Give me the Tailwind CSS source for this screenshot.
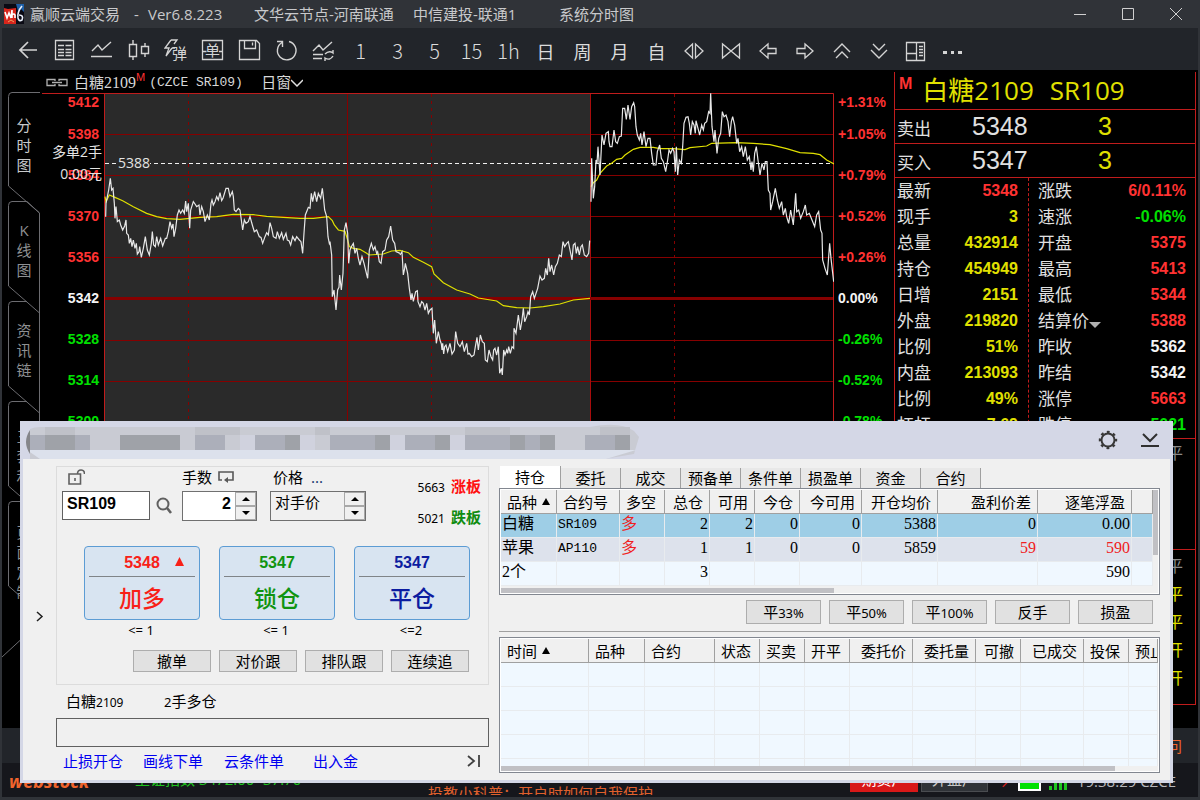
<!DOCTYPE html>
<html lang="zh-CN">
  <head>
    <meta charset="UTF-8" />
    <meta name="viewport" content="width=device-width, initial-scale=1.0" />
    <title>赢顺云端交易</title>
    <script src="https://cdn.jsdelivr.net/npm/@tailwindcss/browser@4"></script>
  </head>
  <body class="bg-black font-['Open_Sans','Noto_Sans_CJK_SC',sans-serif]">
    <div class="relative flex min-h-screen flex-col overflow-hidden bg-[#303338]">
      <!-- Title bar -->
      <header class="flex h-7 items-center pl-1 text-[15px] text-[#c8c9cb]">
        <svg class="mr-1.5 h-5 w-5 shrink-0" viewBox="0 0 20 20">
          <rect width="20" height="20" fill="#0a0a14" />
          <path d="M0 4l4 1 8-1v16H0z" fill="#d8261c" />
          <path d="M12 0h8v8l-3-3-3 2z" fill="#1d5fa8" />
          <path d="M1 8l2 6 2-5 2 5 1-8v8M8 11q2-2 3 0v3" fill="none" stroke="#fff" stroke-width="1.6" />
          <path d="M18 2q-5 6-4 12 1 4 4 2 2-5-3-5" fill="none" stroke="#e8eef8" stroke-width="1.6" />
          <path d="M4 18l3-2 3 2" stroke="#f0a060" fill="none" />
        </svg>
        <span class="w-[104px]">赢顺云端交易</span>
        <span class="w-[14px]">-</span>
        <span class="w-[106px]">Ver6.8.223</span>
        <span class="w-[159px]">文华云节点-河南联通</span>
        <span class="w-[146px]">中信建投-联通1</span>
        <span class="grow">系统分时图</span>
        <button class="flex w-12 justify-center" aria-label="最小化">
          <svg class="h-3 w-3" viewBox="0 0 12 12" stroke="#d0d0d0"><path d="M0 6.5h12" /></svg>
        </button>
        <button class="flex w-12 justify-center" aria-label="最大化">
          <svg class="h-3 w-3" viewBox="0 0 12 12" fill="none" stroke="#d0d0d0"><path d="M.5 .5h11v11H.5z" /></svg>
        </button>
        <button class="flex w-12 justify-center" aria-label="关闭">
          <svg class="h-3 w-3" viewBox="0 0 12 12" stroke="#d0d0d0"><path d="M0 0l12 12M12 0L0 12" /></svg>
        </button>
      </header>

      <!-- Toolbar -->
      <nav class="mr-[2px] ml-[2px] flex h-[42px] items-center bg-[#22252a] pt-1 pl-[7px] font-['Noto_Sans_CJK_SC',sans-serif] text-xl leading-6 font-light text-[#dcdcdc]">
        <button class="flex w-[37px] shrink-0 justify-center" aria-label="返回">
          <svg class="h-6 w-6" viewBox="0 0 24 24" fill="none" stroke="#d4d4d4" stroke-width="1.7"><path d="M21 11H4M12 3l-8 8 8 8" /></svg>
        </button>
        <button class="flex w-[37px] shrink-0 justify-center" aria-label="报价列表">
          <svg class="h-6 w-6" viewBox="0 0 24 24" fill="none" stroke="#d4d4d4" stroke-width="1.3"><path d="M2.500 1.500h18v19h-18zM5 6.500h6M12.500 6.500h6M5 10.500h6M12.500 10.500h6M5 13.500h6M12.500 13.500h6M5 16.500h6M12.500 16.500h6" /></svg>
        </button>
        <button class="flex w-[37px] shrink-0 justify-center" aria-label="分时图">
          <svg class="h-6 w-6" viewBox="0 0 24 24" fill="none" stroke="#d4d4d4" stroke-width="1.4"><path d="M2 12l6-6 4 5 9-8M1 17.500h21" /></svg>
        </button>
        <button class="flex w-[37px] shrink-0 justify-center" aria-label="K线图">
          <svg class="h-6 w-6" viewBox="0 0 24 24" fill="none" stroke="#d4d4d4" stroke-width="1.4"><path d="M2.500 5.500h7v12h-7zM6 1v4M6 18v3M14.500 7.500h7v7h-7zM18 4v3M18 15v3" /></svg>
        </button>
        <button class="flex w-[37px] shrink-0 justify-center" aria-label="弹出下单">
          <svg class="h-6 w-6" viewBox="0 0 24 24" fill="none" stroke="#d4d4d4" stroke-width="1.3">
            <path d="M7 1L1 9h4l-3 8 6-8M7 1h6l-3 4M8 9h3" />
            <text x="8" y="20" font-size="15" font-weight="400" fill="#d4d4d4" stroke="none">弹</text>
          </svg>
        </button>
        <button class="flex w-[37px] shrink-0 justify-center" aria-label="下单">
          <svg class="h-6 w-6" viewBox="0 0 24 24" fill="none" stroke="#d4d4d4" stroke-width="1.3">
            <path d="M1.500 1.500h20v19h-20zM1.500 12.500h4M18 12.500h4" />
            <text x="4" y="17" font-size="15" font-weight="400" fill="#d4d4d4" stroke="none">单</text>
          </svg>
        </button>
        <button class="flex w-[37px] shrink-0 justify-center" aria-label="保存">
          <svg class="h-6 w-6" viewBox="0 0 24 24" fill="none" stroke="#d4d4d4" stroke-width="1.3"><path d="M1.500 1.500h17l3 3v16h-20zM6.500 1.500v8h11v-8M14.500 3.500v3" /></svg>
        </button>
        <button class="flex w-[37px] shrink-0 justify-center" aria-label="刷新">
          <svg class="h-6 w-6" viewBox="0 0 24 24" fill="none" stroke="#d4d4d4" stroke-width="1.4"><path d="M14 2.500A9.300 9.300 0 1 1 7 3.500M2 2.500h5.500V8" /></svg>
        </button>
        <button class="flex w-[37px] shrink-0 justify-center" aria-label="分时切换">
          <svg class="h-6 w-6" viewBox="0 0 24 24" fill="none" stroke="#d4d4d4" stroke-width="1.4"><path d="M1 12l6-6 4 5 9-8M1 15.500h10M1 19.500h9M13 15q4-4 8-1v-3M21 17q-3 5-8 2v3" /></svg>
        </button>
        <button class="w-[37px] shrink-0">1</button>
        <button class="w-[37px] shrink-0">3</button>
        <button class="w-[37px] shrink-0">5</button>
        <button class="w-[37px] shrink-0">15</button>
        <button class="w-[37px] shrink-0">1h</button>
        <button class="w-[37px] shrink-0 text-lg font-normal">日</button>
        <button class="w-[37px] shrink-0 text-lg font-normal">周</button>
        <button class="w-[37px] shrink-0 text-lg font-normal">月</button>
        <button class="w-[37px] shrink-0 text-lg font-normal">自</button>
        <button class="flex w-[37px] shrink-0 justify-center" aria-label="放大">
          <svg class="h-6 w-6" viewBox="0 0 24 24" fill="none" stroke="#d4d4d4" stroke-width="1.3"><path d="M10.500 5v14L3 12zM13.500 5v14L21 12z" /></svg>
        </button>
        <button class="flex w-[37px] shrink-0 justify-center" aria-label="缩小">
          <svg class="h-6 w-6" viewBox="0 0 24 24" fill="none" stroke="#d4d4d4" stroke-width="1.3"><path d="M3.500 5v14l8.500-7zM20.500 5v14L12 12z" /></svg>
        </button>
        <button class="flex w-[37px] shrink-0 justify-center" aria-label="左移">
          <svg class="h-6 w-6" viewBox="0 0 24 24" fill="none" stroke="#d4d4d4" stroke-width="1.3"><path d="M4 12l8-7v4.500h8v5h-8V19z" /></svg>
        </button>
        <button class="flex w-[37px] shrink-0 justify-center" aria-label="右移">
          <svg class="h-6 w-6" viewBox="0 0 24 24" fill="none" stroke="#d4d4d4" stroke-width="1.3"><path d="M20 12l-8-7v4.500H4v5h8V19z" /></svg>
        </button>
        <button class="flex w-[37px] shrink-0 justify-center" aria-label="上翻">
          <svg class="h-6 w-6" viewBox="0 0 24 24" fill="none" stroke="#d4d4d4" stroke-width="1.4"><path d="M4 13l8-8 8 8M6 19l6-6 6 6" /></svg>
        </button>
        <button class="flex w-[37px] shrink-0 justify-center" aria-label="下翻">
          <svg class="h-6 w-6" viewBox="0 0 24 24" fill="none" stroke="#d4d4d4" stroke-width="1.4"><path d="M6 5l6 6 6-6M4 11l8 8 8-8" /></svg>
        </button>
        <button class="flex w-[37px] shrink-0 justify-center" aria-label="布局">
          <svg class="h-6 w-6" viewBox="0 0 24 24" fill="none" stroke="#d4d4d4" stroke-width="1.3"><path d="M2.500 3.500h18v18h-18zM12.500 3.500v18M2.500 14.500h10M15 7.500h4M15 10.500h4M15 13.500h4M15 16.500h4" /></svg>
        </button>
        <button class="flex w-[37px] shrink-0 justify-center" aria-label="更多">
          <svg class="h-6 w-6" viewBox="0 0 24 24" fill="#d4d4d4"><path d="M2 12h4v3H2zM10 12h3v3h-3zM17 12h4v3h-4z" /></svg>
        </button>
      </nav>

      <main class="mx-[2px] flex grow bg-black">
        <!-- Side tabs -->
        <nav class="relative w-[38px] shrink-0 overflow-hidden text-center text-[15px] leading-5 text-[#8e9092]">
          <svg class="absolute inset-0 h-[658px] w-[38px]" viewBox="2 70 38 658" fill="none" stroke="#6c6c70">
            <path d="M40 92.500H12q-3.500 0-3.500 4V186L39.500 213V413M27 201.500H12q-3.500 0-3.500 4V286L39.500 313M27 201.500L39.500 213M27 301.500H12q-3.500 0-3.500 4V386L39.500 413V600M27 401.500H12q-3.500 0-3.500 4V486L39.500 513M27 501.500H12q-3.500 0-3.500 4V586L39.500 613M2 657L40 622" />
          </svg>
          <a href="#" class="relative ml-2 block h-[105px] w-7 pt-[45px] text-[#c8cacc]">分<br />时<br />图</a>
          <a href="#" class="relative mt-[45px] ml-2 block h-[60px] w-7">K<br />线<br />图</a>
          <a href="#" class="relative mt-10 ml-2 block h-[60px] w-7">资<br />讯<br />链</a>
          <a href="#" class="relative mt-[46px] ml-2 block h-[60px] w-7">三<br />套<br />利</a>
          <a href="#" class="relative mt-9 ml-2 block h-20 w-7">页<br />面<br />定<br />制</a>
        </nav>

        <!-- Chart -->
        <section class="flex min-w-0 grow flex-col">
          <div class="flex h-[23px] items-center pt-0.5 pl-1.5 text-[15px] text-[#d8d8d8]">
            <svg class="mr-1.5 h-3 w-[22px]" viewBox="0 0 22 12" fill="none" stroke="#b0b0b0" stroke-width="1.300"><path d="M9 4V2.500H1v6h8V7M13 4V2.500h8v6h-8V7M6 5.500h10" /></svg>
            <span>白糖</span><span class="font-['Liberation_Serif',serif] text-base">2109</span>
            <sup class="mr-1 font-['Liberation_Sans',sans-serif] text-[11px] text-[#ff3232]">M</sup>
            <span class="w-28 font-['Liberation_Mono',monospace] text-[13px] whitespace-pre">(CZCE SR109)</span>
            <button class="flex items-center">日窗
              <svg class="h-3 w-3" viewBox="0 0 12 12" fill="none" stroke="#e0e0e0" stroke-width="1.500"><path d="M0 3l6 6 6-6" /></svg>
            </button>
          </div>
          <div class="relative flex font-['Liberation_Sans',sans-serif] text-sm font-bold text-[#ff3232]">
            <div class="ml-[2px] w-[62px] shrink-0 border-t border-[#c01c1c] pr-[5px] text-right leading-[41px]">
              <div class="h-5 leading-4">5412</div>
              <div>5398</div>
              <div>5384</div>
              <div>5370</div>
              <div>5356</div>
              <div class="text-[#f4f4f4]">5342</div>
              <div class="text-[#00e000]">5328</div>
              <div class="text-[#00e000]">5314</div>
              <div class="text-[#00e000]">5300</div>
            </div>
            <svg class="h-[630px] w-0 min-w-0 grow" viewBox="104 93 730 630" preserveAspectRatio="none" fill="none">
              <rect x="105" y="94" width="485" height="629" fill="#2a2a2a" />
              <g stroke="#860000">
                <path d="M105 134.500H834M105 175.500H834M105 216.500H834M105 257.500H834M105 340.500H834M105 381.500H834" />
                <path d="M347.500 93V723" />
                <path d="M590.500 93V723" stroke="#a80c0c" />
                <path d="M105 298.500H834" stroke-width="3" />
                <path d="M188.500 94V723M431.500 94V723M674.500 94V723" stroke-dasharray="3 4" />
              </g>
              <path d="M104 93.500H833.500V723M104.500 93V723" stroke="#c01c1c" />
              <path d="M105 163.500H834" stroke="#f0f0f0" stroke-dasharray="4 3" />
              <!-- average price -->
              <g stroke="#e0e000" stroke-width="3.600">
                <polyline transform="translate(0 200) scale(.33333)" points="315,-10 318,5 328,-15 345,-8 368,2 400,20 440,40 470,50 500,56 540,58 600,52 650,50 700,43 760,44 800,49 850,52 900,55 940,55 985,50 997,62 1003,75 1015,90 1035,94 1043,120 1048,140 1060,145 1080,148 1100,160 1107,165 1150,162 1175,153 1200,151 1225,158 1240,172 1270,187 1295,200 1302,222 1330,248 1370,270 1410,282 1435,294 1490,303 1510,317 1550,323 1590,324 1630,320 1680,312 1720,300 1770,295" />
                <polyline transform="translate(400 0) scale(.33333)" points="573,560 580,548 590,540 600,520 620,498 635,490 650,478 665,475 675,465 700,448 720,442 760,442 780,446 820,446 855,449 870,443 920,438 935,430 1010,428 1060,430 1110,434 1160,446 1200,458 1240,460 1260,464 1280,480 1302,492" />
              </g>
              <!-- last price -->
              <g stroke="#e8e8e8" stroke-width="3.600">
                <polyline transform="translate(0 200) scale(.33333)" points="317,50 318,10 326,-30 331,-65 335,-30 339,-35 343,10 345,55 348,20 352,65 358,60 362,75 368,90 374,78 378,60 380,100 385,105 388,130 392,115 396,140 400,120 405,145 409,130 412,162 417,155 419,140 424,172 430,145 436,110 442,150 448,165 454,130 457,95 461,135 466,140 470,110 475,135 482,115 488,138 496,115 500,115 505,95 510,65 515,85 519,72 522,110 527,85 532,45 537,30 542,40 548,30 553,40 557,3 560,35 565,10 569,85 572,30 580,5 585,12 590,20 597,15 600,45 605,20 610,35 615,65 622,45 628,60 633,10 636,0 640,15 645,5 650,-10 655,0 660,-22 665,2 669,-5 672,-15 678,-35 685,-35 690,-10 697,-25 700,-10 703,30 708,35 715,25 720,30 724,60 728,90 733,60 738,70 745,65 750,50 757,75 763,95 770,90 778,110 783,112 788,130 795,110 800,98 805,105 810,68 815,85 820,110 828,115 832,95 838,115 845,98 850,118 858,100 862,120 867,122 872,135 878,110 885,122 890,110 898,120 903,125 908,160 912,100 916,45 922,30 925,22 930,25 934,-20 938,5 944,-25 950,5 955,-20 962,-5 967,-35 971,0 974,30 980,50 984,110 988,130 990,125 995,165 997,290 1002,270 1005,300 1008,330 1013,270 1017,262 1019,225 1024,270 1029,220 1033,90 1038,68 1043,100 1046,190 1050,150 1054,140 1060,130 1065,160 1070,145 1075,175 1080,195 1086,170 1092,190 1098,215 1103,235 1108,150 1114,130 1120,150 1125,140 1130,160 1133,155 1138,185 1143,190 1148,155 1155,150 1160,120 1166,110 1172,78 1178,120 1184,130 1188,155 1200,160" />
                <polyline transform="translate(400 200) scale(.33333)" points="0,165 6,155 10,225 14,205 16,190 23,220 28,265 33,300 36,280 40,304 47,275 52,272 54,305 60,320 65,305 70,310 75,330 80,310 85,340 90,330 96,325 100,400 104,360 109,430 115,395 120,420 124,432 126,450 128,430 131,462 134,440 138,435 143,455 150,430 156,462 163,450 167,395 173,430 180,440 187,425 193,455 200,430 204,462 208,460 215,470 222,465 226,440 231,412 235,450 241,405 247,425 253,430 256,480 262,485 267,450 273,470 278,480 281,450 285,445 290,465 295,440 299,520 304,505 307,525 311,450 315,465 320,450 323,460 326,440 331,460 336,440 341,445 342,385 348,400 355,345 361,390 366,360 370,325 374,365 380,350 384,335 388,345 392,290 398,275 403,295 408,280 413,265 420,228 426,240 433,235 437,205 442,225 446,175 450,215 455,195 461,225 466,200 472,190 478,165 484,170 489,125 494,140 500,130 505,125 510,150 516,180 520,135 525,130 529,160 533,140 538,165 543,140 547,135 553,165 560,170 566,160 569,122" />
                <polyline transform="translate(400 0) scale(.33333)" points="573,605 575,475 580,595 584,560 588,480 591,490 594,440 600,525 606,405 612,435 618,400 625,395 627,425 630,440 636,440 642,390 647,425 652,430 658,410 664,408 668,325 674,325 679,358 684,315 690,358 695,320 701,308 704,320 708,380 712,405 718,420 722,400 726,435 732,395 738,440 744,415 750,415 755,460 760,495 768,495 772,455 779,435 784,475 790,485 797,515 803,480 807,450 812,460 818,445 822,455 826,515 829,440 833,525 838,480 844,490 848,440 852,370 858,352 864,350 868,370 872,405 877,365 882,375 886,400 888,362 894,385 899,405 905,375 910,390 914,370 920,365 926,335 930,340 932,280 936,380 942,425 945,390 951,460 956,415 962,400 967,335 972,350 978,345 984,365 989,410 994,365 998,350 1004,375 1010,430 1014,415 1019,455 1025,440 1030,470 1036,440 1042,480 1048,470 1053,510 1056,485 1060,515 1064,460 1069,440 1074,480 1080,525 1086,490 1092,510 1096,485 1101,485 1105,570 1110,580 1112,630 1118,605 1126,565 1132,600 1138,625 1145,605 1150,645 1156,625 1160,650 1166,670 1172,630 1180,675 1187,580 1190,635 1196,630 1202,655 1210,635 1216,615 1220,645 1228,640 1236,660 1244,680 1250,645 1256,635 1262,690 1266,700 1268,780 1275,805 1282,825 1289,730 1293,775 1301,845" />
              </g>
            </svg>
            <div class="w-[60px] shrink-0 pl-1 leading-[41px]">
              <div class="h-[21px] leading-[18px]">+1.31%</div>
              <div>+1.05%</div>
              <div>+0.79%</div>
              <div>+0.52%</div>
              <div>+0.26%</div>
              <div class="text-[#f4f4f4]">0.00%</div>
              <div class="text-[#00e000]">-0.26%</div>
              <div class="text-[#00e000]">-0.52%</div>
              <div class="text-[#00e000]">-0.78%</div>
            </div>
            <!-- open position marker -->
            <div class="absolute top-12 left-0 w-[62px] text-right font-['Open_Sans','Noto_Sans_CJK_SC',sans-serif] text-[14px] leading-[22px] font-normal text-[#e4e4e4]">
              <div>多单2手</div>
              <div>0.00元</div>
            </div>
            <div class="absolute top-[60px] left-[78px] bg-[#2a2a2a] font-['Open_Sans',sans-serif] text-sm leading-5 font-normal text-[#e4e4e4]">5388</div>
          </div>
        </section>

        <!-- Quote panel -->
        <aside class="mt-[2px] mr-[2px] h-[633px] w-[302px] shrink-0 border-x border-b border-[#c01c1c] text-[17px] text-[#e0e0e0]">
          <div class="flex h-[38px] items-center border-b border-[#c01c1c] pl-1 text-[26px] text-[#e0e000]">
            <b class="mr-2.5 self-start font-['Liberation_Sans',sans-serif] text-base text-[#ff3232]">M</b>
            <span class="mr-4">白糖2109</span>
            <span>SR109</span>
          </div>
          <div class="flex h-[34px] items-center border-b border-[#c01c1c] pl-0.5">
            <span class="w-[75px] pt-1">卖出</span>
            <span class="w-[126px] font-['Liberation_Sans',sans-serif] text-[25px]">5348</span>
            <span class="font-['Liberation_Sans',sans-serif] text-[25px] text-[#e0e000]">3</span>
          </div>
          <div class="flex h-[34px] items-center border-b border-[#c01c1c] pl-0.5">
            <span class="w-[75px] pt-1">买入</span>
            <span class="w-[126px] font-['Liberation_Sans',sans-serif] text-[25px]">5347</span>
            <span class="font-['Liberation_Sans',sans-serif] text-[25px] text-[#e0e000]">3</span>
          </div>
          <div class="flex border-b border-[#c01c1c] leading-[26px]">
            <dl class="grid w-[134px] grid-cols-[auto_1fr] border-r border-dashed border-[#c01c1c] pr-[10px] pl-0.5 [&>dd]:text-right [&>dd]:font-['Liberation_Sans',sans-serif] [&>dd]:text-base [&>dd]:leading-[26px] [&>dd]:font-bold [&>dd]:text-[#e0e000]">
              <dt>最新</dt><dd><span class="text-[#ff3232]">5348</span></dd>
              <dt>现手</dt><dd>3</dd>
              <dt>总量</dt><dd>432914</dd>
              <dt>持仓</dt><dd>454949</dd>
              <dt>日增</dt><dd>2151</dd>
              <dt>外盘</dt><dd>219820</dd>
              <dt>比例</dt><dd>51%</dd>
              <dt>内盘</dt><dd>213093</dd>
              <dt>比例</dt><dd>49%</dd>
              <dt>杠杆</dt><dd>7.69</dd>
            </dl>
            <dl class="grid grow grid-cols-[auto_1fr] pr-[9px] pl-[9px] [&>dd]:text-right [&>dd]:font-['Liberation_Sans',sans-serif] [&>dd]:text-base [&>dd]:leading-[26px] [&>dd]:font-bold [&>dd]:text-[#ff3232]">
              <dt>涨跌</dt><dd>6/0.11%</dd>
              <dt>速涨</dt><dd><span class="text-[#00e000]">-0.06%</span></dd>
              <dt>开盘</dt><dd>5375</dd>
              <dt>最高</dt><dd>5413</dd>
              <dt>最低</dt><dd>5344</dd>
              <dt class="flex items-center">结算价<svg class="mt-2 h-1.5 w-3" viewBox="0 0 12 6" fill="#b0b0b0"><path d="M0 0h12L6 6z" /></svg></dt><dd>5388</dd>
              <dt>昨收</dt><dd><span class="text-[#f4f4f4]">5362</span></dd>
              <dt>昨结</dt><dd><span class="text-[#f4f4f4]">5342</span></dd>
              <dt>涨停</dt><dd>5663</dd>
              <dt>跌停</dt><dd><span class="text-[#00e000]">5021</span></dd>
            </dl>
          </div>
          <div class="h-[111px] border-b border-[#c01c1c] pr-3 text-right text-base leading-7 text-[#8a8a8a]">平</div>
          <div class="pt-0.5 pr-3 text-right text-base leading-7 text-[#e0e000]">
            <div class="text-[#8a8a8a]">平</div>
            <div>平</div>
            <div>平</div>
            <div>开</div>
            <div>开</div>
          </div>
        </aside>
      </main>

      <div class="mx-[2px] h-[35px] shrink-0 bg-[#22252a] pr-4 text-right text-[15px] leading-9 text-[#f0642c]">访问</div>

      <!-- Status bar -->
      <footer class="mx-[2px] mb-[3px] flex h-[34px] shrink-0 items-start overflow-hidden bg-[#16171c] pl-[7px] text-[15px]">
        <b class="w-[126px] pt-1.5 text-lg leading-6 text-[#f0642c] italic">webstock</b>
        <span class="w-[293px] pt-1.5 leading-5 text-[#1fc41f]">上证指数 3472.00 -37.70</span>
        <span class="mt-5 h-3 grow overflow-hidden leading-[20px] text-[#e0602c]">投教小科普：开户时如何自我保护</span>
        <button class="mr-[3px] h-[29px] w-[68px] bg-[#d81818] pt-1 text-white">期货户</button>
        <button class="mr-3 h-[29px] w-[67px] border border-[#4a4c50] bg-[#303338] pt-1 text-[#c8c8c8]">外盘户</button>
        <span class="w-[18px] pt-2 leading-5 text-[#e02020]">↗</span>
        <span class="mt-3 mr-2 h-4 w-[23px] border-2 border-white bg-[#00e000]"></span>
        <svg class="mt-3 mr-2 h-4 w-5" viewBox="0 0 20 16" fill="#1fc41f"><path d="M0 11h3v4H0zM5 8h3v7H5zM10 5h3v10h-3zM15 2h3v13h-3z" /></svg>
        <span class="mr-[22px] pt-2 leading-5 text-[#b8b8bc]">19:38:29 CZCE</span>
      </footer>

      <!-- Order window -->
      <section class="absolute top-[421px] right-[27px] left-5 border-x-[3px] border-b-[3px] border-[#d4d7e6] bg-[#f0f0f0] font-['Noto_Sans','Noto_Sans_CJK_SC',sans-serif] text-[15px] text-black">
        <div class="flex h-[38px] items-center bg-[#d4d7e6]">
          <svg class="h-[38px] w-[620px] shrink-0" viewBox="23 421 620 38">
            <path d="M30 429q4-2 10-2H590q30-6 44 4l5 6-5 17-30 5H30z" fill="#c9cbd3" />
            <path d="M27 450H636l-30 9H40z" fill="#dce1ec" />
            <path d="M30 430q-8 12 0 24z" fill="#85868a" />
            <g fill="#acafba">
              <path d="M30 435h45v15H30zM195 435h30v15h-30zM255 435h30v15h-30zM330 435h60v15h-60zM405 435h45v15h-45zM465 435h90v15h-90zM585 435h45v15h-45zM75 435h15v15H75z" />
            </g>
            <path d="M45 435h30v15H45zM120 435h60v15h-60zM285 435h15v15h-15zM375 435h15v15h-15zM435 435h15v15h-15zM510 435h15v15h-15zM540 435h15v15h-15zM615 435h15v15h-15z" fill="#9fa2a8" />
            <path d="M300 435h15v15h-15zM390 435h15v15h-15zM450 435h15v15h-15zM240 435h15v15h-15z" fill="#d0d2de" />
            <path d="M45 427h30v8H45zM195 427h45v8h-45zM315 427h15v8h-15zM465 427h45v8h-45zM600 427h30v8h-30z" fill="#bfc1c8" />
          </svg>
          <button class="mr-[22px] ml-auto" aria-label="设置">
            <svg class="h-5 w-5" viewBox="0 0 20 20" fill="none" stroke="#383838">
              <circle cx="10" cy="10" r="6.500" stroke-width="2" />
              <circle cx="10" cy="10" r="8" stroke-width="2.400" stroke-dasharray="2.800 3.483" stroke-dashoffset="1.400" />
            </svg>
          </button>
          <button class="mr-2.5" aria-label="收起">
            <svg class="h-5 w-5" viewBox="0 0 20 20" fill="none" stroke="#303030" stroke-width="2"><path d="M3 4l7 7 7-7M1 16h18" /></svg>
          </button>
        </div>

        <div class="flex h-[321px] pt-[7px]">
          <button class="flex w-[33px] shrink-0 justify-center pt-[145px]" aria-label="展开">
            <svg class="h-[11px] w-2" viewBox="0 0 8 11" fill="none" stroke="#202020" stroke-width="1.500"><path d="M1 1l5 4.500L1 10" /></svg>
          </button>

          <div class="w-[433px] shrink-0">
            <div class="h-[219px] border border-[#dcdcdc] px-[5px]">
              <div class="flex">
                <div class="w-[120px]">
                  <div class="flex h-6 items-center pb-1 pl-1.5">
                    <svg class="h-4 w-[17px]" viewBox="0 0 17 16" fill="none" stroke="#606060" stroke-width="1.600"><path d="M1 5h11.500v10H1zM9.500 5q0-4 3.500-4t3.500 4M7 9v3" /></svg>
                  </div>
                  <div class="flex items-center">
                    <input aria-label="合约" class="h-[29px] w-[88px] border border-[#606060] bg-white px-1 pb-1 font-['Liberation_Sans',sans-serif] text-base font-bold" value="SR109" />
                    <button class="ml-1.5" aria-label="查找">
                      <svg class="h-[17px] w-4" viewBox="0 0 16 17" fill="none" stroke="#606060" stroke-width="2"><circle cx="7" cy="7" r="5.500" /><path d="M11 11l4 5" stroke-width="2.600" /></svg>
                    </button>
                  </div>
                </div>
                <div class="w-[88px]">
                  <div class="flex h-6 items-center pb-1">
                    <label for="lots">手数</label>
                    <svg class="ml-1.5 h-4 w-[17px]" viewBox="0 0 17 16" fill="none" stroke="#585858" stroke-width="1.600"><path d="M4 11H1V3h14v8H8" /><path d="M10 8v6l-4-3z" fill="#585858" stroke="none" /></svg>
                  </div>
                  <div class="flex h-[30px] w-[75px] border border-[#707070] bg-white">
                    <input id="lots" class="w-[52px] min-w-0 px-1 pb-1 text-right font-['Liberation_Sans',sans-serif] text-base font-bold" value="2" />
                    <div class="flex w-[21px] flex-col">
                      <button class="flex flex-1 items-center justify-center border border-[#a8a8a8] bg-[#f0f0f0]" aria-label="加"><svg class="h-1 w-2" viewBox="0 0 8 4"><path d="M4 0l4 4H0z" /></svg></button>
                      <button class="flex flex-1 items-center justify-center border border-[#a8a8a8] bg-[#f0f0f0]" aria-label="减"><svg class="h-1 w-2" viewBox="0 0 8 4"><path d="M4 4l4-4H0z" /></svg></button>
                    </div>
                  </div>
                </div>
                <div class="w-24">
                  <div class="flex h-6 items-center pb-1 pl-[3px]">
                    <label for="price" class="mr-2">价格</label>
                    <button class="text-[#1c3c70]">...</button>
                  </div>
                  <div class="flex h-[30px] border border-[#707070]">
                    <input id="price" class="w-[73px] min-w-0 px-1 pb-2" value="对手价" />
                    <div class="flex w-[21px] flex-col">
                      <button class="flex flex-1 items-center justify-center border border-[#a8a8a8] bg-[#f0f0f0]" aria-label="上"><svg class="h-1 w-2" viewBox="0 0 8 4"><path d="M4 0l4 4H0z" /></svg></button>
                      <button class="flex flex-1 items-center justify-center border border-[#a8a8a8] bg-[#f0f0f0]" aria-label="下"><svg class="h-1 w-2" viewBox="0 0 8 4"><path d="M4 4l4-4H0z" /></svg></button>
                    </div>
                  </div>
                </div>
                <div class="ml-auto pt-1 pr-[2px] leading-[31px]">
                  <div><span class="mr-1.5 text-xs">5663</span><b class="text-[#ff1010]">涨板</b></div>
                  <div><span class="mr-1.5 text-xs">5021</span><b class="text-[#108c10]">跌板</b></div>
                </div>
              </div>

              <div class="mt-[13px] flex justify-end gap-[19px] pr-[13px] text-center">
                <div>
                  <button class="relative block h-[74px] w-[116px] rounded border border-[#5c9cd4] bg-[#d8e4f1] px-1 text-[#f82018]">
                    <span class="block h-[29px] border-b border-[#808488] font-['Liberation_Sans',sans-serif] text-base leading-[29px] font-bold">5348</span>
                    <svg class="absolute top-2.5 left-[90px] h-[9px] w-[9px]" viewBox="0 0 9 9" fill="#f82018"><path d="M4.500 0L9 9H0z" /></svg>
                    <span class="block text-[23px] leading-[42px] font-medium">加多</span>
                  </button>
                  <span class="block pr-0.5 text-[13px] leading-5">&lt;= 1</span>
                </div>
                <div>
                  <button class="block h-[74px] w-[116px] rounded border border-[#5c9cd4] bg-[#d8e4f1] px-1 text-[#109410]">
                    <span class="block h-[29px] border-b border-[#808488] font-['Liberation_Sans',sans-serif] text-base leading-[29px] font-bold">5347</span>
                    <span class="block text-[23px] leading-[42px] font-medium">锁仓</span>
                  </button>
                  <span class="block pr-0.5 text-[13px] leading-5">&lt;= 1</span>
                </div>
                <div>
                  <button class="block h-[74px] w-[116px] rounded border border-[#5c9cd4] bg-[#d8e4f1] px-1 text-[#0c1ca0]">
                    <span class="block h-[29px] border-b border-[#808488] font-['Liberation_Sans',sans-serif] text-base leading-[29px] font-bold">5347</span>
                    <span class="block text-[23px] leading-[42px] font-medium">平仓</span>
                  </button>
                  <span class="block pr-0.5 text-[13px] leading-5">&lt;=2</span>
                </div>
              </div>

              <div class="mt-2.5 flex justify-end gap-2 pr-3.5 leading-5">
                <button class="h-[22px] w-[78px] border border-[#adadad] bg-[#e1e1e1]">撤单</button>
                <button class="h-[22px] w-[78px] border border-[#adadad] bg-[#e1e1e1]">对价跟</button>
                <button class="h-[22px] w-[78px] border border-[#adadad] bg-[#e1e1e1]">排队跟</button>
                <button class="h-[22px] w-[78px] border border-[#adadad] bg-[#e1e1e1]">连续追</button>
              </div>
            </div>

            <div class="flex h-[33px] items-center pl-[10px]">
              <span class="w-[98px]">白糖<span class="text-xs">2109</span></span>
              <span><span class="text-[13px]">2</span>手多仓</span>
            </div>
            <input aria-label="提示信息" class="block h-[29px] w-full border border-[#606060]" readonly />
            <div class="flex h-7 items-center pr-2 pl-[7px] text-[#0000f0]">
              <a href="#" class="w-20">止损开仓</a>
              <a href="#" class="w-[81px]">画线下单</a>
              <a href="#" class="w-[89px]">云条件单</a>
              <a href="#">出入金</a>
              <button class="ml-auto" aria-label="末尾">
                <svg class="h-3 w-3.5" viewBox="0 0 14 12" fill="none" stroke="#404040" stroke-width="1.800"><path d="M1 1l6 5-6 5M12 0v12" /></svg>
              </button>
            </div>
          </div>

          <!-- Positions and orders -->
          <div class="mr-2.5 ml-2.5 flex min-w-0 grow flex-col">
            <div class="flex h-[22px] items-end pl-px leading-5">
              <button class="h-[22px] w-[61px] border-r border-[#a0a0a0] bg-white">持仓</button>
              <button class="h-5 w-[60px] border-r border-[#a0a0a0] bg-[#e8e8e8]">委托</button>
              <button class="h-5 w-[60px] border-r border-[#a0a0a0] bg-[#e8e8e8]">成交</button>
              <button class="h-5 w-[60px] border-r border-[#a0a0a0] bg-[#e8e8e8]">预备单</button>
              <button class="h-5 w-[60px] border-r border-[#a0a0a0] bg-[#e8e8e8]">条件单</button>
              <button class="h-5 w-[60px] border-r border-[#a0a0a0] bg-[#e8e8e8]">损盈单</button>
              <button class="h-5 w-[60px] border-r border-[#a0a0a0] bg-[#e8e8e8]">资金</button>
              <button class="h-5 w-[60px] border-r border-[#a0a0a0] bg-[#e8e8e8]">合约</button>
            </div>
            <div class="flex h-[107px] border border-[#828790] bg-white p-px">
              <div class="flex min-w-0 grow flex-col">
                <table class="w-full table-fixed border-separate border-spacing-0 text-right whitespace-nowrap [&_td]:h-6 [&_td]:border-r [&_td]:border-b [&_td]:border-[#e8ebee] [&_td]:px-px [&_td]:pb-1 [&_td]:text-base [&_td]:leading-4 [&_th]:h-6 [&_th]:border-r [&_th]:border-b [&_th]:border-[#a0a0a0] [&_th]:bg-[#f0f0f0] [&_th]:px-[6px] [&_th]:leading-5 [&_th]:font-normal">
                  <colgroup>
                    <col class="w-[56px]" /><col class="w-[63px]" /><col class="w-[45px]" /><col class="w-[45px]" /><col class="w-[45px]" /><col class="w-[45px]" /><col class="w-[62px]" /><col class="w-[76px]" /><col class="w-[100px]" /><col class="w-[94px]" /><col />
                  </colgroup>
                  <thead>
                    <tr>
                      <th class="text-left"><span class="flex items-center">品种<svg class="ml-[5px] h-[7px] w-2 shrink-0" viewBox="0 0 8 7"><path d="M4 0l4 7H0z" /></svg></span></th>
                      <th class="text-left">合约号</th><th class="text-left">多空</th><th>总仓</th><th>可用</th><th>今仓</th><th>今可用</th><th>开仓均价</th><th>盈利价差</th><th>逐笔浮盈</th><th></th>
                    </tr>
                  </thead>
                  <tbody class="font-['Liberation_Serif','Noto_Sans_CJK_SC',serif]">
                    <tr class="bg-[#9ecee6]">
                      <td class="text-left">白糖</td><td class="text-left"><span class="font-['Liberation_Mono',monospace] text-[13px]">SR109</span></td><td class="text-left text-[#f02020]">多</td><td>2</td><td>2</td><td>0</td><td>0</td><td>5388</td><td>0</td><td>0.00</td><td></td>
                    </tr>
                    <tr class="bg-[#dde2ec]">
                      <td class="text-left">苹果</td><td class="text-left"><span class="font-['Liberation_Mono',monospace] text-[13px]">AP110</span></td><td class="text-left text-[#f02020]">多</td><td>1</td><td>1</td><td>0</td><td>0</td><td>5859</td><td class="text-[#f02020]">59</td><td class="text-[#f02020]">590</td><td></td>
                    </tr>
                    <tr class="bg-[#f0f8ff]">
                      <td class="text-left">2个</td><td></td><td></td><td>3</td><td></td><td></td><td></td><td></td><td></td><td>590</td><td></td>
                    </tr>
                  </tbody>
                </table>
                <div class="grow bg-[#f0f0f0] pt-[2px]"><div class="h-[5px] w-[333px] bg-[#c0c0c4]"></div></div>
              </div>
              <div class="w-[5px] shrink-0 bg-[#f0f0f0]"><div class="h-[65px] bg-[#c0c0c4]"></div></div>
            </div>

            <div class="mt-[5px] flex justify-end gap-2 pr-[7px] leading-[22px]">
              <button class="h-6 w-[75px] border border-[#adadad] bg-[#e1e1e1]">平<span class="text-[13px]">33%</span></button>
              <button class="h-6 w-[75px] border border-[#adadad] bg-[#e1e1e1]">平<span class="text-[13px]">50%</span></button>
              <button class="h-6 w-[75px] border border-[#adadad] bg-[#e1e1e1]">平<span class="text-[13px]">100%</span></button>
              <button class="h-6 w-[75px] border border-[#adadad] bg-[#e1e1e1]">反手</button>
              <button class="h-6 w-[75px] border border-[#adadad] bg-[#e1e1e1]">损盈</button>
            </div>
            <hr class="mt-[7px] border-[#a0a0a0]" />
            <div class="mt-[5px] flex h-[136px] flex-col overflow-hidden border border-[#828790] bg-white p-px">
              <div class="h-[127px] overflow-hidden bg-[#f0f8ff]">
                <table class="w-full table-fixed border-separate border-spacing-0 text-right whitespace-nowrap [&_td]:h-6 [&_td]:border-r [&_td]:border-b [&_td]:border-[#e8ebee] [&_th]:h-6 [&_th]:overflow-hidden [&_th]:border-r [&_th]:border-b [&_th]:border-[#a0a0a0] [&_th]:bg-[#f0f0f0] [&_th]:px-[6px] [&_th]:leading-5 [&_th]:font-normal">
                  <colgroup>
                    <col class="w-[88px]" /><col class="w-[56px]" /><col class="w-[70px]" /><col class="w-[45px]" /><col class="w-[45px]" /><col class="w-[45px]" /><col class="w-[63px]" /><col class="w-[63px]" /><col class="w-[45px]" /><col class="w-[63px]" /><col class="w-[45px]" /><col />
                  </colgroup>
                  <thead>
                    <tr>
                      <th class="text-left"><span class="flex items-center">时间<svg class="ml-[5px] h-[7px] w-2 shrink-0" viewBox="0 0 8 7"><path d="M4 0l4 7H0z" /></svg></span></th>
                      <th class="text-left">品种</th><th class="text-left">合约</th><th class="text-left">状态</th><th class="text-left">买卖</th><th class="text-left">开平</th><th>委托价</th><th>委托量</th><th>可撤</th><th>已成交</th><th class="text-left">投保</th><th class="text-left">预止</th>
                    </tr>
                  </thead>
                  <tbody>
                    <tr><td></td><td></td><td></td><td></td><td></td><td></td><td></td><td></td><td></td><td></td><td></td><td></td></tr>
                    <tr><td></td><td></td><td></td><td></td><td></td><td></td><td></td><td></td><td></td><td></td><td></td><td></td></tr>
                    <tr><td></td><td></td><td></td><td></td><td></td><td></td><td></td><td></td><td></td><td></td><td></td><td></td></tr>
                    <tr><td></td><td></td><td></td><td></td><td></td><td></td><td></td><td></td><td></td><td></td><td></td><td></td></tr>
                    <tr><td></td><td></td><td></td><td></td><td></td><td></td><td></td><td></td><td></td><td></td><td></td><td></td></tr>
                  </tbody>
                </table>
              </div>
              <div class="h-[5px] bg-[#f0f0f0]"><div class="h-[5px] w-[614px] bg-[#c0c0c4]"></div></div>
            </div>
          </div>
        </div>
      </section>
    </div>
  </body>
</html>
